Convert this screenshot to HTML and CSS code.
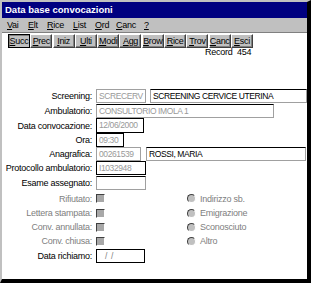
FILE: index.html
```html
<!DOCTYPE html>
<html lang="it">
<head>
  <meta charset="UTF-8">
  <title>Data base convocazioni</title>
  <link rel="stylesheet" href="styles.css">
</head>
<body>
  <div class="win">
    <div class="titlebar">Data base convocazioni</div>
    <div class="menubar">
      <span class="m1"><u>V</u>ai</span>
      <span class="m2"><u>E</u>lt</span>
      <span class="m3"><u>R</u>ice</span>
      <span class="m4"><u>L</u>ist</span>
      <span class="m5"><u>O</u>rd</span>
      <span class="m6"><u>C</u>anc</span>
      <span><u>?</u></span>
    </div>
    <div class="client">
      <div class="toolbar">
        <button class="btn pressed"><u>S</u>ucc</button>
        <button class="btn"><u>P</u>rec</button>
        <button class="btn"><u>I</u>niz</button>
        <button class="btn"><u>U</u>lti</button>
        <button class="btn"><u>M</u>odi</button>
        <button class="btn"><u>A</u>gg</button>
        <button class="btn"><u>B</u>row</button>
        <button class="btn"><u>R</u>ice</button>
        <button class="btn"><u>T</u>rov</button>
        <button class="btn"><u>C</u>anc</button>
        <button class="btn"><u>E</u>sci</button>
      </div>
      <div class="record">Record&nbsp; 454</div>

      <div class="form">
        <label>Screening:</label>
        <div class="field">
          <span class="box dis w50">SCRECERV</span>
          <span class="box top w157 ml4">SCREENING CERVICE UTERINA</span>
        </div>

        <label>Ambulatorio:</label>
        <div class="field"><span class="box dis top w178">CONSULTORIO IMOLA 1</span></div>

        <label>Data convocazione:</label>
        <div class="field"><span class="box dis dark tall w48">12/06/2000</span></div>

        <label>Ora:</label>
        <div class="field"><span class="box dis dark w28">09:30</span></div>

        <label>Anagrafica:</label>
        <div class="field">
          <span class="box dis w45">00261539</span>
          <span class="box top w160 ml5">ROSSI, MARIA</span>
        </div>

        <label>Protocollo ambulatorio:</label>
        <div class="field"><span class="box dis dark w50">I1032948</span></div>

        <label>Esame assegnato:</label>
        <div class="field"><span class="box top w50"></span></div>

        <label class="off">Rifiutato:</label>
        <div class="field"><span class="chk"></span><span class="opt"><span class="radio"></span>Indirizzo sb.</span></div>

        <label class="off">Lettera stampata:</label>
        <div class="field"><span class="chk"></span><span class="opt"><span class="radio"></span>Emigrazione</span></div>

        <label class="off">Conv. annullata:</label>
        <div class="field"><span class="chk"></span><span class="opt"><span class="radio"></span>Sconosciuto</span></div>

        <label class="off">Conv. chiusa:</label>
        <div class="field"><span class="chk"></span><span class="opt"><span class="radio"></span>Altro</span></div>

        <label>Data richiamo:</label>
        <div class="field"><span class="box dark w49 pl">/ &nbsp;/</span></div>
      </div>
    </div>
  </div>
</body>
</html>
```
FILE: styles.css
```css
body {
  margin: 0;
  font-family: "Liberation Sans", Arial, sans-serif;
  font-size: 9px;
  letter-spacing: -0.25px;
  color: #000;
}

.win {
  width: 311px;
  height: 283px;
  box-sizing: border-box;
  border-top: 2px solid #c0c0c0;
  border-left: 2px solid #c0c0c0;
  border-right: 4px solid #000;
  border-bottom: 4px solid #000;
  background: #c0c0c0;
  display: flex;
  flex-direction: column;
}

.titlebar {
  height: 16px;
  background: #000080;
  color: #fff;
  font-weight: bold;
  font-size: 9.5px;
  letter-spacing: 0;
  line-height: 16px;
  padding-left: 3px;
}

.menubar {
  height: 14px;
  display: flex;
  padding-left: 5px;
  line-height: 14px;
}

.menubar span { margin-right: 7px; }
.menubar .m1 { width: 14px; }
.menubar .m2 { width: 12px; }
.menubar .m3 { width: 19px; }
.menubar .m4 { width: 15px; }
.menubar .m5 { width: 14px; }
.menubar .m6 { width: 21px; }

.client {
  flex: 1;
  background: #fff;
  border-top: 1px solid #808080;
}

.toolbar {
  display: flex;
  gap: 0.3px;
  padding: 1px 0 0 6px;
  height: 14px;
}

.btn {
  font: inherit;
  letter-spacing: -0.3px;
  height: 14px;
  width: 22px;
  padding: 0;
  margin: 0;
  background: #c0c0c0;
  border: 1px solid;
  border-color: #fff #404040 #404040 #fff;
  box-shadow: inset -1px -1px 0 #808080;
  line-height: 11px;
  color: #000;
}

.btn.pressed {
  border-color: #000;
  box-shadow: inset 1px 1px 0 #808080;
}

.record {
  padding-left: 203px;
  line-height: 9px;
  height: 9px;
}

.form {
  display: grid;
  grid-template-columns: 90px auto;
  grid-template-rows: 14px 15px 15px 14px 14px 14px 16px 15px 14px 14px 14px 15px;
  column-gap: 4px;
  align-items: center;
  padding-top: 32px;
}

.form label {
  text-align: right;
  white-space: nowrap;
}

.form label.off {
  color: #808080;
}

.field {
  display: flex;
  align-items: center;
}

.box {
  box-sizing: border-box;
  height: 14px;
  line-height: 12px;
  border: 1px solid #a0a0a0;
  padding-left: 2px;
  font-size: 8.5px;
  letter-spacing: -0.4px;
  white-space: nowrap;
  overflow: hidden;
}

.box.dis { color: #999; }
.box.top { border-top-color: #000; }
.box.dark { border-color: #000; }
.box.tall { height: 15px; line-height: 13px; }
.box.pl { padding-left: 8px; color: #808080; }

.w28 { width: 28px; }
.w45 { width: 45px; }
.w48 { width: 48px; }
.w49 { width: 49px; }
.w50 { width: 50px; }
.w157 { width: 157px; }
.w160 { width: 160px; }
.w178 { width: 178px; }
.ml4 { margin-left: 4px; }
.ml5 { margin-left: 5px; }

.chk {
  width: 9px;
  height: 9px;
  box-sizing: border-box;
  background: #a8a8a8;
  border-top: 1px solid #404040;
  border-left: 1px solid #404040;
  border-right: 1px solid #fff;
  border-bottom: 1px solid #fff;
}

.opt {
  margin-left: 82px;
  display: flex;
  align-items: center;
  color: #808080;
}

.radio {
  width: 9px;
  height: 9px;
  box-sizing: border-box;
  border-radius: 50%;
  background: #c0c0c0;
  border: 1px solid;
  border-color: #404040 #fff #fff #404040;
  margin-right: 4px;
}
```
